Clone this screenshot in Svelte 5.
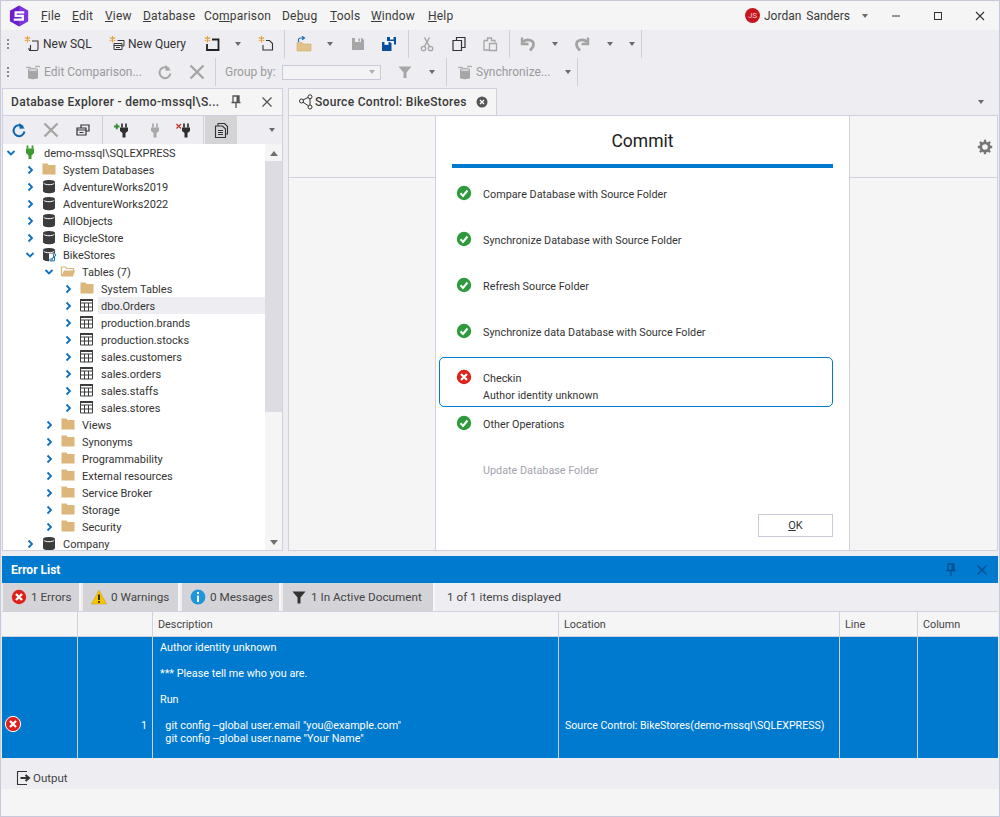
<script>
  const menus = [
    { pre: '', key: 'F', post: 'ile', w: 31 },
    { pre: '', key: 'E', post: 'dit', w: 33 },
    { pre: '', key: 'V', post: 'iew', w: 38 },
    { pre: '', key: 'D', post: 'atabase', w: 61 },
    { pre: 'Co', key: 'm', post: 'parison', w: 78 },
    { pre: 'De', key: 'b', post: 'ug', w: 48 },
    { pre: '', key: 'T', post: 'ools', w: 41 },
    { pre: '', key: 'W', post: 'indow', w: 57 },
    { pre: '', key: 'H', post: 'elp', w: 30 }
  ];

  // w = slot width, p = left padding, so the slots line up with the real toolbar
  const toolbarOne = [
    { t: 'grip', w: 17 },
    { i: 'newsql', text: 'New SQL', w: 82, p: 6 },
    { i: 'newquery', text: 'New Query', w: 96, p: 9 },
    { i: 'newblock', w: 32, p: 8 },
    { t: 'caret', w: 24, p: 6.5 },
    { i: 'newdoc', w: 26, p: 6 },
    { t: 'sep', w: 12, p: 6 },
    { i: 'open', w: 32, p: 6 },
    { t: 'caret', w: 20, p: 4.5 },
    { i: 'save', w: 32, p: 8 },
    { i: 'saveall', w: 27, p: 7 },
    { t: 'sep', w: 11, p: 7 },
    { i: 'cut', w: 24, p: 7 },
    { i: 'copy', w: 39, p: 15 },
    { i: 'paste', w: 24, p: 7 },
    { t: 'sep', w: 14, p: 10 },
    { i: 'undo', w: 27, p: 7 },
    { t: 'caret', w: 24, p: 11.5 },
    { i: 'redo', w: 30, p: 10 },
    { t: 'caret', w: 20, p: 12.5 },
    { t: 'caret', w: 26, p: 14.5 },
    { t: 'sep', w: 2, p: 1 }
  ];

  const toolbarTwo = [
    { t: 'grip', w: 17 },
    { i: 'editcmp', text: 'Edit Comparison...', w: 135, p: 7, dim: true },
    { i: 'refreshgray', w: 28, p: 4 },
    { i: 'xgray', w: 28, p: 8 },
    { t: 'sep', w: 10, p: 6 },
    { t: 'label', text: 'Group by:', w: 63, p: 6 },
    { t: 'select', w: 99 },
    { i: 'filtergray', w: 40, p: 16 },
    { t: 'caret', w: 20, p: 7.5 },
    { t: 'sep', w: 10, p: 5 },
    { i: 'editcmp', text: 'Synchronize...', w: 109, p: 6, dim: true },
    { t: 'caret', w: 16, p: 4.5 },
    { t: 'sep', w: 2, p: 1 }
  ];

  const tree = [
    { d: 0, open: true, i: 'conn', text: 'demo-mssql\\SQLEXPRESS' },
    { d: 1, i: 'folder', text: 'System Databases' },
    { d: 1, i: 'db', text: 'AdventureWorks2019' },
    { d: 1, i: 'db', text: 'AdventureWorks2022' },
    { d: 1, i: 'db', text: 'AllObjects' },
    { d: 1, i: 'db', text: 'BicycleStore' },
    { d: 1, open: true, i: 'dbsc', text: 'BikeStores' },
    { d: 2, open: true, i: 'folderopen', text: 'Tables (7)' },
    { d: 3, i: 'folder', text: 'System Tables' },
    { d: 3, i: 'table', text: 'dbo.Orders', hover: true },
    { d: 3, i: 'table', text: 'production.brands' },
    { d: 3, i: 'table', text: 'production.stocks' },
    { d: 3, i: 'table', text: 'sales.customers' },
    { d: 3, i: 'table', text: 'sales.orders' },
    { d: 3, i: 'table', text: 'sales.staffs' },
    { d: 3, i: 'table', text: 'sales.stores' },
    { d: 2, i: 'folder', text: 'Views' },
    { d: 2, i: 'folder', text: 'Synonyms' },
    { d: 2, i: 'folder', text: 'Programmability' },
    { d: 2, i: 'folder', text: 'External resources' },
    { d: 2, i: 'folder', text: 'Service Broker' },
    { d: 2, i: 'folder', text: 'Storage' },
    { d: 2, i: 'folder', text: 'Security' },
    { d: 1, i: 'db', text: 'Company' }
  ];

  const steps = [
    { s: 'ok', text: 'Compare Database with Source Folder' },
    { s: 'ok', text: 'Synchronize Database with Source Folder' },
    { s: 'ok', text: 'Refresh Source Folder' },
    { s: 'ok', text: 'Synchronize data Database with Source Folder' },
    { s: 'err', text: 'Checkin', sub: 'Author identity unknown' },
    { s: 'ok', text: 'Other Operations' },
    { s: 'off', text: 'Update Database Folder' }
  ];

  const filters = [
    { i: 'err', text: '1 Errors', w: 78 },
    { i: 'warn', text: '0 Warnings', w: 97 },
    { i: 'info', text: '0 Messages', w: 99 },
    { i: 'filter', text: '1 In Active Document', w: 152 }
  ];

  const description = `Author identity unknown

*** Please tell me who you are.

Run

  git config --global user.email "you@example.com"
  git config --global user.name "Your Name"`;
</script>

{#snippet icon(name)}
  <svg class="ic" viewBox="0 0 16 16" width="16" height="16">
    {#if name === 'folder'}
      <path d="M1.500 1.500h5l1 1.500h7V12.500H1.500z" fill="#dcb67a" />
    {:else if name === 'folderopen'}
      <path d="M1.500 12V3h4l1 1.500h7V7" fill="none" stroke="#dcb67a" stroke-width="1.200" />
      <path d="M1.500 12l2.500-5.500H15L13 12.500H2z" fill="#dcb67a" />
    {:else if name === 'db'}
      <path d="M2 3C2 .2 14 .2 14 3V12C14 15 2 15 2 12z" fill="#3c3c3c" />
      <path d="M2.700 4.200c1.500 2 9.100 2 10.600 0" fill="none" stroke="#fff" stroke-width="1" />
    {:else if name === 'dbsc'}
      <path d="M2 3C2 .2 14 .2 14 3V12C14 15 2 15 2 12z" fill="#3c3c3c" />
      <path d="M2.700 4.200c1.500 2 9.100 2 10.600 0" fill="none" stroke="#fff" stroke-width="1" />
      <rect x="8" y="6.500" width="8" height="9" fill="#fff" />
      <path d="M10 13.500l3.500-5M10 13.500l3.500 .5M13.500 8.500v5" stroke="#1f6fb5" stroke-width="1.100" fill="none" />
      <circle cx="13.500" cy="8" r="1.200" fill="#fff" stroke="#1f6fb5" />
      <circle cx="10" cy="13" r="1.200" fill="#fff" stroke="#1f6fb5" />
    {:else if name === 'table'}
      <path d="M1.500 1.500h12v11.500h-12zM1.500 5h12M1.500 9h12M5.500 5v8M9.500 5v8" fill="none" stroke="#3c3c3c" stroke-width="1" />
      <rect x="1" y="1" width="13" height="2" fill="#3c3c3c" />
    {:else if name === 'conn'}
      <path d="M5.500 .5v3M10.500 .5v3" stroke="#3c9a2e" stroke-width="1.800" />
      <path d="M4 3.500h8v4.500l-2.500 2.500v3.500h-3v-3.500L4 8z" fill="#3c9a2e" />
    {:else if name === 'plugadd' || name === 'plugdel' || name === 'pluggray'}
      {@const col = name === 'pluggray' ? '#a8a8a8' : '#2f2f2f'}
      <path d="M8 1.500v4M12 1.500v4" stroke={col} stroke-width="1.700" />
      <path d="M6 5.500h8v3.500l-2.500 2v4.500h-3V11L6 9z" fill={col} />
      {#if name === 'plugadd'}
        <path d="M0 4.500h5.500M2.750 1.800v5.400" stroke="#2f8f2f" stroke-width="1.800" />
      {:else if name === 'plugdel'}
        <path d="M.5 2l4.500 4.500M5 2L.5 6.500" stroke="#c8352d" stroke-width="1.300" />
      {/if}
    {:else if name === 'newsql' || name === 'newquery' || name === 'newblock' || name === 'newdoc'}
      <path d="M3.500 0v6.500M.8 1.600l5.400 3.200M6.200 1.600l-5.400 3.200" stroke="#e79f3c" stroke-width="1.200" />
      {#if name === 'newsql'}
        <path d="M8 5h6V13c0 1-1 1.500-1.500 1.500H5c1 0 1.500-.5 1.500-1.500V9" fill="none" stroke="#333" stroke-width="1.100" />
        <path d="M4 13h3" stroke="#333" stroke-width="1.100" />
      {:else if name === 'newquery'}
        <path d="M8.500 4.500h6.500v5.500h-1.500M5 7.500h8v6H5zM5 9.500h8M7 11.500h4" fill="none" stroke="#333" stroke-width="1" />
      {:else if name === 'newblock'}
        <path d="M8 3.500h6.500v10.500H3V8" fill="none" stroke="#222" stroke-width="1.800" />
      {:else}
        <path d="M8 4.500h3.500l3 3v6.500H5V9" fill="none" stroke="#333" stroke-width="1.100" />
      {/if}
    {:else if name === 'open'}
      <path d="M1 6.500h5l1 1.500h8v7H1z" fill="#e2c28c" stroke="#d2ac6c" stroke-width=".6" />
      <path d="M2.500 6V3.500C2.500 2.500 3.500 2 4.500 2H8M6 .3L8.500 2 6 3.700" fill="none" stroke="#1f6fb5" stroke-width="1.200" />
    {:else if name === 'save'}
      <path d="M2 2h10l2 2v10H2z" fill="#a6a6a6" />
      <rect x="5" y="2" width="6" height="4" fill="#eeeef2" />
      <rect x="8.500" y="2.500" width="1.500" height="3" fill="#a6a6a6" />
    {:else if name === 'saveall'}
      <path d="M6 1h9v7.500H13V5H6z" fill="#0a4f99" />
      <rect x="9" y="1" width="3.500" height="2.500" fill="#fff" />
      <path d="M1 6h8l1.500 1.500V15H1z" fill="#0a4f99" />
      <rect x="3.500" y="6" width="4" height="2.800" fill="#fff" />
    {:else if name === 'cut'}
      <path d="M5.500 1.500l5 9M10.500 1.500l-5 9" stroke="#a6a6a6" stroke-width="1.500" />
      <circle cx="4.500" cy="12.500" r="2.200" fill="none" stroke="#a6a6a6" stroke-width="1.300" />
      <circle cx="11.500" cy="12.500" r="2.200" fill="none" stroke="#a6a6a6" stroke-width="1.300" />
    {:else if name === 'copy'}
      <path d="M5.500 4.500V1.500H14V11.500H10.500M2 4.500h8.500V14.500H2z" fill="none" stroke="#333" stroke-width="1.200" />
    {:else if name === 'paste'}
      <path d="M2 4.500h3.500V2h4v2.500H13v2M2 4.500V14h5" fill="none" stroke="#a6a6a6" stroke-width="1.300" />
      <path d="M7.500 7.500h7V14.500h-7z" fill="none" stroke="#a6a6a6" stroke-width="1.300" />
    {:else if name === 'undo' || name === 'redo'}
      <g transform={name === 'redo' ? 'translate(16 0) scale(-1 1)' : ''}>
        <path d="M3 6C6 3 13.500 3 13.500 8.500c0 2.500-1.500 4-3.500 6" fill="none" stroke="#a3a3a3" stroke-width="2.800" />
        <path d="M2 1.500v6.500h6.500" fill="none" stroke="#a3a3a3" stroke-width="2.400" />
      </g>
    {:else if name === 'editcmp'}
      <path d="M3 6h10v8c0 1.500-10 1.500-10 0z" fill="#a6a6a6" />
      <ellipse cx="8" cy="6" rx="5" ry="1.500" fill="#dcdcdc" stroke="#a6a6a6" />
      <path d="M1 3.500h5M10 2.500h5" stroke="#b3b3b3" stroke-width="1.300" />
    {:else if name === 'refreshgray' || name === 'refreshblue'}
      {@const col = name === 'refreshblue' ? '#0e64ad' : '#a6a6a6'}
      <path d="M12 4.800A5.500 5.500 0 1 0 13.500 9.500" fill="none" stroke={col} stroke-width="2" />
      <path d="M8.500 .8v5.900l5.300-.2z" fill={col} />
    {:else if name === 'xgray'}
      <path d="M1.500 1.500l13 13M14.500 1.500l-13 13" stroke="#a6a6a6" stroke-width="2.400" />
    {:else if name === 'filtergray'}
      <path d="M1.500 2.500h13l-5 6v5.500h-3V8.500z" fill="#a6a6a6" />
    {:else if name === 'filter'}
      <path d="M1.500 2.500h13l-5 6v6h-3v-6z" fill="#333" />
    {:else if name === 'windows'}
      <path d="M6 6V3h8v6h-3M2 6h9v7H2zM2 8h9M4.500 10.500h4" fill="none" stroke="#333" stroke-width="1.200" />
    {:else if name === 'docs'}
      <path d="M5 4V1.500h6.500l3 3V12H13" fill="none" stroke="#333" stroke-width="1.100" />
      <path d="M2.500 4h7l3 3v8.500h-10zM5 8.500h5M5 10.500h5M5 12.500h5" fill="none" stroke="#333" stroke-width="1.100" />
    {:else if name === 'ok'}
      <circle cx="8" cy="8" r="7.200" fill="#2f9a3c" />
      <path d="M4.500 8.300l2.500 2.700 4.500-5.500" fill="none" stroke="#fff" stroke-width="2" />
    {:else if name === 'err'}
      <circle cx="8" cy="8" r="7.200" fill="#e0201b" />
      <path d="M5 5l6 6M11 5l-6 6" stroke="#fff" stroke-width="2.300" />
    {:else if name === 'errring'}
      <circle cx="8" cy="8" r="7.600" fill="#e0201b" stroke="#fff" />
      <path d="M5 5l6 6M11 5l-6 6" stroke="#fff" stroke-width="2.300" />
    {:else if name === 'warn'}
      <path d="M8 1l7.500 14H.5z" fill="#f7c400" stroke="#c79a18" stroke-width=".5" />
      <path d="M8 5.500v5.500M8 12v1.800" stroke="#222" stroke-width="1.800" />
    {:else if name === 'info'}
      <circle cx="8" cy="8" r="7.400" fill="#1e96dc" />
      <path d="M8 3v2M8 6.500v6.500" stroke="#fff" stroke-width="2" />
    {:else if name === 'output'}
      <path d="M11 1.500H1.500v13H11" fill="none" stroke="#333" stroke-width="1.100" />
      <path d="M4.500 8h8M9.500 5l3.500 3-3.500 3" fill="none" stroke="#333" stroke-width="2" />
    {:else if name === 'branch'}
      <circle cx="3.500" cy="7" r="2" fill="none" stroke="#333" />
      <circle cx="12" cy="2.800" r="2" fill="none" stroke="#333" />
      <circle cx="12" cy="13" r="2" fill="none" stroke="#333" />
      <path d="M5 8.300l5.500 3.500M5.200 5.900L10 3.500M12 5v6" fill="none" stroke="#333" />
    {:else if name === 'pin' || name === 'pinblue'}
      {@const col = name === 'pin' ? '#555' : '#00518f'}
      <path d="M5 2h6v6.500H5zM3.500 8.500h9M8 8.500v5.500" fill="none" stroke={col} stroke-width="1.300" />
      <rect x="8.500" y="2" width="2.500" height="6.500" fill={col} />
    {:else if name === 'close' || name === 'closeblue'}
      {@const col = name === 'close' ? '#555' : '#00518f'}
      <path d="M3.500 3.500l9 9M12.500 3.500l-9 9" stroke={col} stroke-width="1.300" />
    {:else if name === 'gear'}
      <circle cx="8" cy="8" r="4.200" fill="none" stroke="#777" stroke-width="2.800" />
      <path d="M8 .8v3M8 12.200v3M.8 8h3M12.200 8h3M2.900 2.900L5 5M11 11l2.100 2.100M13.100 2.900L11 5M5 11l-2.100 2.100" stroke="#777" stroke-width="2.300" />
    {/if}
  </svg>
{/snippet}

{#snippet caret()}
  <span class="caret"></span>
{/snippet}

{#snippet bar(items)}
  {#each items as it}
    <div class="slot" style="width:{it.w}px;padding-left:{it.p ?? 0}px">
      {#if it.t === 'grip'}
        <span class="grip"></span>
      {:else if it.t === 'sep'}
        <span class="sep"></span>
      {:else if it.t === 'caret'}
        {@render caret()}
      {:else if it.t === 'label'}
        <span class="dim">{it.text}</span>
      {:else if it.t === 'select'}
        <span class="select">{@render caret()}</span>
      {:else if it.i}
        {@render icon(it.i)}
        {#if it.text}<span class="slot-text" class:dim={it.dim}>{it.text}</span>{/if}
      {/if}
    </div>
  {/each}
{/snippet}

<div class="window">
  <header class="titlebar">
    <svg class="logo" viewBox="1 .5 20 23" width="20" height="22">
      <path d="M11 1l9.500 5.500v11L11 23 1.500 17.500v-11z" fill="#6a1fc9" />
      <path d="M11 1l9.500 5.500v11L11 23z" fill="#7f35dc" />
      <path d="M16.500 8.300H7.500v3.500h7.500v3.900H5.500" fill="none" stroke="#fff" stroke-width="2.300" />
    </svg>
    <nav class="menu">
      {#each menus as m}
        <span class="menu-item" style="width:{m.w}px">{m.pre}<u>{m.key}</u>{m.post}</span>
      {/each}
    </nav>
    <div class="user">
      <span class="avatar">JS</span>
      <span class="user-name">Jordan Sanders</span>
      {@render caret()}
    </div>
    <div class="win-btns">
      <svg width="42" height="16" viewBox="0 0 42 16"><path d="M17 8h8" stroke="#333" /></svg>
      <svg width="42" height="16" viewBox="0 0 42 16"><rect x="17.500" y="4.500" width="7" height="7" fill="none" stroke="#333" /></svg>
      <svg width="40" height="16" viewBox="0 0 40 16"><path d="M17 4l8 8M25 4l-8 8" stroke="#333" stroke-width="1.100" /></svg>
    </div>
  </header>

  <div class="toolbar">{@render bar(toolbarOne)}</div>
  <div class="toolbar">{@render bar(toolbarTwo)}</div>

  <div class="dock">
    <section class="explorer">
      <div class="pane-title">
        <span class="pane-name">Database Explorer - demo-mssql\S...</span>
        <span class="pane-btn">{@render icon('pin')}</span>
        <span class="pane-btn">{@render icon('close')}</span>
      </div>
      <div class="explorer-tools">
        <span class="tool">{@render icon('refreshblue')}</span>
        <span class="tool">{@render icon('xgray')}</span>
        <span class="tool">{@render icon('windows')}</span>
        <span class="sep tool-sep"></span>
        <span class="tool">{@render icon('plugadd')}</span>
        <span class="tool narrow">{@render icon('pluggray')}</span>
        <span class="tool">{@render icon('plugdel')}</span>
        <span class="sep tool-sep"></span>
        <span class="tool tool-on">{@render icon('docs')}</span>
        <span class="tool-end">{@render caret()}</span>
      </div>
      <div class="tree-wrap">
        <div class="tree">
          {#each tree as row}
            <div class="row" style="padding-left:{19 * row.d}px">
              <svg class="arrow" viewBox="0 0 16 16" width="16" height="16">
                {#if row.open}
                  <path d="M4.500 6l3.500 3.500L11.500 6" fill="none" stroke="#0e70c0" stroke-width="1.800" />
                {:else}
                  <path d="M6.500 4.500l3.500 3.500-3.500 3.500" fill="none" stroke="#0e70c0" stroke-width="1.800" />
                {/if}
              </svg>
              <span class="row-icon">{@render icon(row.i)}</span>
              <span class="row-text" class:hover={row.hover}>{row.text}</span>
            </div>
          {/each}
        </div>
        <div class="scroll">
          <span class="up"></span>
          <span class="thumb"></span>
          <span class="down"></span>
        </div>
      </div>
    </section>

    <section class="document">
      <div class="tabs">
        <div class="tab">
          {@render icon('branch')}
          <span class="tab-name">Source Control: BikeStores</span>
          <svg viewBox="0 0 12 12" width="12" height="12">
            <circle cx="6" cy="6" r="5.500" fill="#555" />
            <path d="M4 4l4 4M8 4l-4 4" stroke="#fff" stroke-width="1.300" />
          </svg>
        </div>
        <span class="tabs-end">{@render caret()}</span>
      </div>
      <div class="doc-body">
        <div class="side left"><div class="side-head"></div></div>
        <div class="commit">
          <h1>Commit</h1>
          <div class="rule"></div>
          <div class="steps">
            {#each steps as s}
              <div class="step" class:failed={s.s === 'err'} class:off={s.s === 'off'}>
                <span class="step-icon">
                  {#if s.s !== 'off'}{@render icon(s.s)}{/if}
                </span>
                <div class="step-body">
                  <div class="step-text">{s.text}</div>
                  {#if s.sub}<div class="step-sub">{s.sub}</div>{/if}
                </div>
              </div>
            {/each}
          </div>
          <div class="actions"><button class="ok"><u>O</u>K</button></div>
        </div>
        <div class="side">
          <div class="side-head gear">{@render icon('gear')}</div>
        </div>
      </div>
    </section>
  </div>

  <section class="errors">
    <div class="errors-head">
      <span class="errors-title">Error List</span>
      <span class="pane-btn">{@render icon('pinblue')}</span>
      <span class="pane-btn">{@render icon('closeblue')}</span>
    </div>
    <div class="filters">
      {#each filters as f}
        <div class="filter" style="width:{f.w}px">
          {@render icon(f.i)}
          <span>{f.text}</span>
        </div>
      {/each}
      <span class="shown">1 of 1 items displayed</span>
    </div>
    <div class="grid head">
      <div></div>
      <div></div>
      <div>Description</div>
      <div>Location</div>
      <div>Line</div>
      <div>Column</div>
    </div>
    <div class="grid selected">
      <div class="cell-icon">{@render icon('errring')}</div>
      <div class="cell-num">1</div>
      <div class="cell-desc">{description}</div>
      <div class="cell-loc">Source Control: BikeStores(demo-mssql\SQLEXPRESS)</div>
      <div></div>
      <div></div>
    </div>
  </section>

  <div class="output">
    {@render icon('output')}
    <span>Output</span>
  </div>
  <div class="statusbar"></div>
</div>

<style>
  :global(body) {
    margin: 0;
    background: #eeeef2;
  }

  .window {
    width: 1000px;
    height: 817px;
    box-sizing: border-box;
    border: 1px solid #c8cadb;
    display: flex;
    flex-direction: column;
    overflow: hidden;
    background: #eeeef2;
    color: #2b2b2b;
    font-family: Roboto, 'Noto Sans', sans-serif;
    font-size: 12px;
  }

  .ic {
    flex: none;
    display: block;
  }

  .titlebar {
    height: 29px;
    flex: none;
    display: flex;
    align-items: center;
    background: #f5f5f5;
  }

  .logo {
    margin-left: 8px;
    flex: none;
  }

  .menu {
    display: flex;
    margin-left: 12px;
    font-size: 12px;
    color: #3a3a3a;
    letter-spacing: .2px;
  }

  .menu-item {
    white-space: nowrap;
  }

  .user {
    margin-left: auto;
    display: flex;
    align-items: center;
    font-size: 12px;
    color: #3a3a3a;
  }

  .avatar {
    width: 15px;
    height: 15px;
    border-radius: 50%;
    background: #c4161f;
    color: #f3c6c6;
    font-size: 8px;
    line-height: 15px;
    text-align: center;
    margin-right: 4px;
  }

  .user-name {
    width: 97.5px;
    word-spacing: 2px;
  }

  .user .caret {
    margin-right: 7.5px;
  }

  .win-btns {
    display: flex;
    flex: none;
    width: 124px;
  }

  .caret {
    display: inline-block;
    flex: none;
    width: 0;
    height: 0;
    border-left: 3.500px solid transparent;
    border-right: 3.500px solid transparent;
    border-top: 4px solid #6a6a6a;
  }

  .toolbar {
    height: 28px;
    flex: none;
    display: flex;
    align-items: center;
  }

  .slot {
    height: 28px;
    flex: none;
    box-sizing: border-box;
    display: flex;
    align-items: center;
    white-space: nowrap;
  }

  .slot-text {
    margin-left: 3px;
    color: #333;
  }

  .dim,
  .slot-text.dim {
    color: #9a9a9a;
  }

  .grip {
    width: 2px;
    height: 11px;
    margin-left: 6px;
    background: repeating-linear-gradient(#8a8a8a 0 2px, transparent 2px 4px);
  }

  .sep {
    display: block;
    flex: none;
    width: 1px;
    height: 28px;
    background: #cfcfd6;
  }

  .select {
    width: 99px;
    height: 15px;
    box-sizing: border-box;
    border: 1px solid #c8cadb;
    background: #f3f3f6;
    display: flex;
    align-items: center;
    justify-content: flex-end;
    padding-right: 5px;
  }

  .select .caret {
    border-top-color: #b0b0b0;
  }

  .dock {
    flex: 1;
    min-height: 0;
    display: flex;
    gap: 5px;
    padding: 2px 1px 0 1px;
  }

  .explorer {
    width: 281px;
    flex: none;
    display: flex;
    flex-direction: column;
    box-sizing: border-box;
    border: 1px solid #d0d1de;
  }

  .pane-title {
    height: 26px;
    flex: none;
    display: flex;
    align-items: center;
    background: #f5f5f5;
    border-bottom: 1px solid #d0d1de;
  }

  .pane-name {
    flex: 1;
    padding-left: 8px;
    font-weight: 500;
    letter-spacing: .32px;
    color: #3a3a3a;
    white-space: nowrap;
  }

  .pane-btn {
    width: 31px;
    display: flex;
    justify-content: center;
  }

  .explorer-tools {
    height: 28px;
    flex: none;
    display: flex;
    align-items: center;
  }

  .tool {
    width: 32px;
    height: 28px;
    flex: none;
    display: flex;
    align-items: center;
    justify-content: center;
  }

  .tool.narrow {
    width: 30px;
  }

  .tool-sep {
    height: 28px;
    margin: 0 3px;
  }

  .tool-on {
    background: #d4d4d6;
    margin-left: -2px;
  }

  .tool-end {
    margin-left: 31.500px;
    display: flex;
  }

  .tree-wrap {
    flex: 1;
    min-height: 0;
    display: flex;
  }

  .tree {
    flex: 1;
    min-width: 0;
    background: #fff;
    overflow: hidden;
  }

  .row {
    height: 17px;
    display: flex;
    align-items: center;
  }

  .arrow {
    flex: none;
    margin-top: 1px;
  }

  .row-icon {
    margin-left: 3px;
    margin-right: 3px;
    flex: none;
  }

  .row-text {
    flex: 1;
    height: 17px;
    line-height: 20px;
    padding-left: 3px;
    white-space: nowrap;
    font-size: 11px;
    color: #333;
  }

  .row-text.hover {
    background: #eeeef2;
  }

  .scroll {
    width: 17px;
    flex: none;
    background: #f5f5f5;
    display: flex;
    flex-direction: column;
    align-items: center;
  }

  .up,
  .down {
    flex: none;
    width: 0;
    height: 0;
    border-left: 4px solid transparent;
    border-right: 4px solid transparent;
  }

  .up {
    margin: 7px 0 5px;
    border-bottom: 5px solid #707070;
  }

  .down {
    margin: auto 0 5px;
    border-top: 5px solid #707070;
  }

  .thumb {
    width: 17px;
    height: 251px;
    flex: none;
    background: #dcdce2;
  }

  .document {
    flex: 1;
    min-width: 0;
    display: flex;
    flex-direction: column;
  }

  .tabs {
    height: 27px;
    flex: none;
    display: flex;
    align-items: center;
  }

  .tab {
    width: 209px;
    height: 27px;
    box-sizing: border-box;
    display: flex;
    align-items: center;
    padding-left: 9px;
    background: #f5f5f5;
    border: 1px solid #d0d1de;
    border-bottom: none;
  }

  .tab-name {
    flex: 1;
    padding-left: 1px;
    font-weight: 500;
    letter-spacing: .3px;
    color: #3a3a3a;
    white-space: nowrap;
  }

  .tab svg:last-child {
    margin-right: 8px;
  }

  .tabs-end {
    margin-left: auto;
    margin-right: 14px;
    display: flex;
  }

  .doc-body {
    flex: 1;
    min-height: 0;
    display: flex;
    border-right: 1px solid #d0d1de;
    border-bottom: 1px solid #d0d1de;
    border-top: 1px solid #d0d1de;
  }

  .side {
    flex: 1;
    background: #f5f5f5;
    border-left: 1px solid #d0d1de;
  }

  .side.left {
    flex: none;
    width: 147px;
    box-sizing: border-box;
  }

  .side-head {
    height: 62px;
    box-sizing: border-box;
    border-bottom: 1px solid #d0d1de;
  }

  .gear {
    display: flex;
    justify-content: flex-end;
    align-items: center;
    padding-right: 4px;
  }

  .commit {
    width: 414px;
    flex: none;
    box-sizing: border-box;
    background: #fff;
    border-left: 1px solid #d0d1de;
    display: flex;
    flex-direction: column;
    padding: 0 16px 13px 3px;
  }

  h1 {
    margin: 0;
    height: 48px;
    font-size: 17.5px;
    font-weight: 400;
    line-height: 50px;
    text-align: center;
    color: #1c1c1c;
    padding-left: 13px;
  }

  .rule {
    height: 4px;
    flex: none;
    margin-left: 13px;
    background: #007acf;
  }

  .steps {
    flex: 1;
    padding-top: 2px;
  }

  .step {
    height: 46px;
    box-sizing: border-box;
    display: flex;
    align-items: center;
    padding-left: 17px;
  }

  .step.failed {
    height: 50px;
    margin: 3px 0 -7px;
    border: 1px solid #007acf;
    border-radius: 5px;
    padding-left: 16px;
    padding-top: 13px;
    align-items: flex-start;
  }

  .step-icon {
    width: 16px;
    height: 16px;
    margin-right: 11px;
  }

  .step.failed .step-icon {
    margin-top: -2px;
  }

  .step-body {
    padding-top: 2px;
  }

  .step.failed .step-body {
    padding-top: 0;
  }

  .step-text {
    font-size: 10.8px;
    color: #333;
  }

  .step.failed .step-text {
    line-height: 16px;
  }

  .step-sub {
    font-size: 10.5px;
    line-height: 18px;
    letter-spacing: .1px;
    color: #333;
  }

  .step.off .step-text {
    color: #a3a3ad;
  }

  .actions {
    display: flex;
    justify-content: flex-end;
  }

  .ok {
    width: 75px;
    height: 23px;
    padding: 0;
    background: #fff;
    border: 1px solid #c8cadb;
    border-radius: 0;
    font-family: inherit;
    font-size: 11px;
    color: #333;
  }

  .errors {
    margin: 5px 1px 0 1px;
    flex: none;
    display: flex;
    flex-direction: column;
  }

  .errors-head {
    height: 27px;
    display: flex;
    align-items: center;
    background: #007acf;
    padding-right: 1px;
  }

  .errors-title {
    flex: 1;
    padding-left: 9px;
    color: #fff;
    font-weight: 700;
  }

  .filters {
    height: 28px;
    display: flex;
    align-items: center;
    gap: 2px;
    padding-left: 1px;
    font-size: 11.7px;
  }

  .filter {
    height: 28px;
    box-sizing: border-box;
    display: flex;
    align-items: center;
    gap: 4px;
    padding-left: 8px;
    background: #d4d4d8;
    border-right: 2px solid #f7f7f9;
    color: #444;
    white-space: nowrap;
  }

  .shown {
    margin-left: 10px;
    color: #444;
  }

  .grid {
    display: grid;
    grid-template-columns: 76px 75px 406px 281px 78px 1fr;
    font-size: 10.8px;
  }

  .grid > div {
    box-sizing: border-box;
    border-right: 1px solid #d0d1de;
    min-width: 0;
  }

  .grid > div:last-child {
    border-right: none;
  }

  .head {
    height: 26px;
    background: #f5f5f5;
    border-top: 1px solid #d0d1de;
    border-bottom: 1px solid #d0d1de;
    box-sizing: border-box;
    line-height: 26px;
    color: #444;
  }

  .head > div {
    padding-left: 5px;
  }

  .selected {
    height: 121px;
    background: #007acf;
    color: #fff;
    line-height: 13px;
  }

  .selected > div {
    display: flex;
    align-items: flex-end;
    padding-bottom: 26px;
  }

  .selected > .cell-icon {
    padding-bottom: 26px;
    padding-left: 3px;
  }

  .selected > .cell-num {
    justify-content: flex-end;
    padding-right: 5px;
  }

  .selected > .cell-desc {
    white-space: pre-wrap;
    align-items: flex-start;
    padding: 4px 0 0 7px;
  }

  .selected > .cell-loc {
    padding-left: 6px;
    white-space: nowrap;
    font-size: 10.6px;
  }

  .output {
    height: 31px;
    flex: none;
    box-sizing: border-box;
    display: flex;
    align-items: center;
    padding: 9px 0 0 15px;
    font-size: 11.5px;
    color: #444;
    gap: 1px;
  }

  .statusbar {
    height: 27px;
    flex: none;
    background: #f5f5f5;
  }
</style>
